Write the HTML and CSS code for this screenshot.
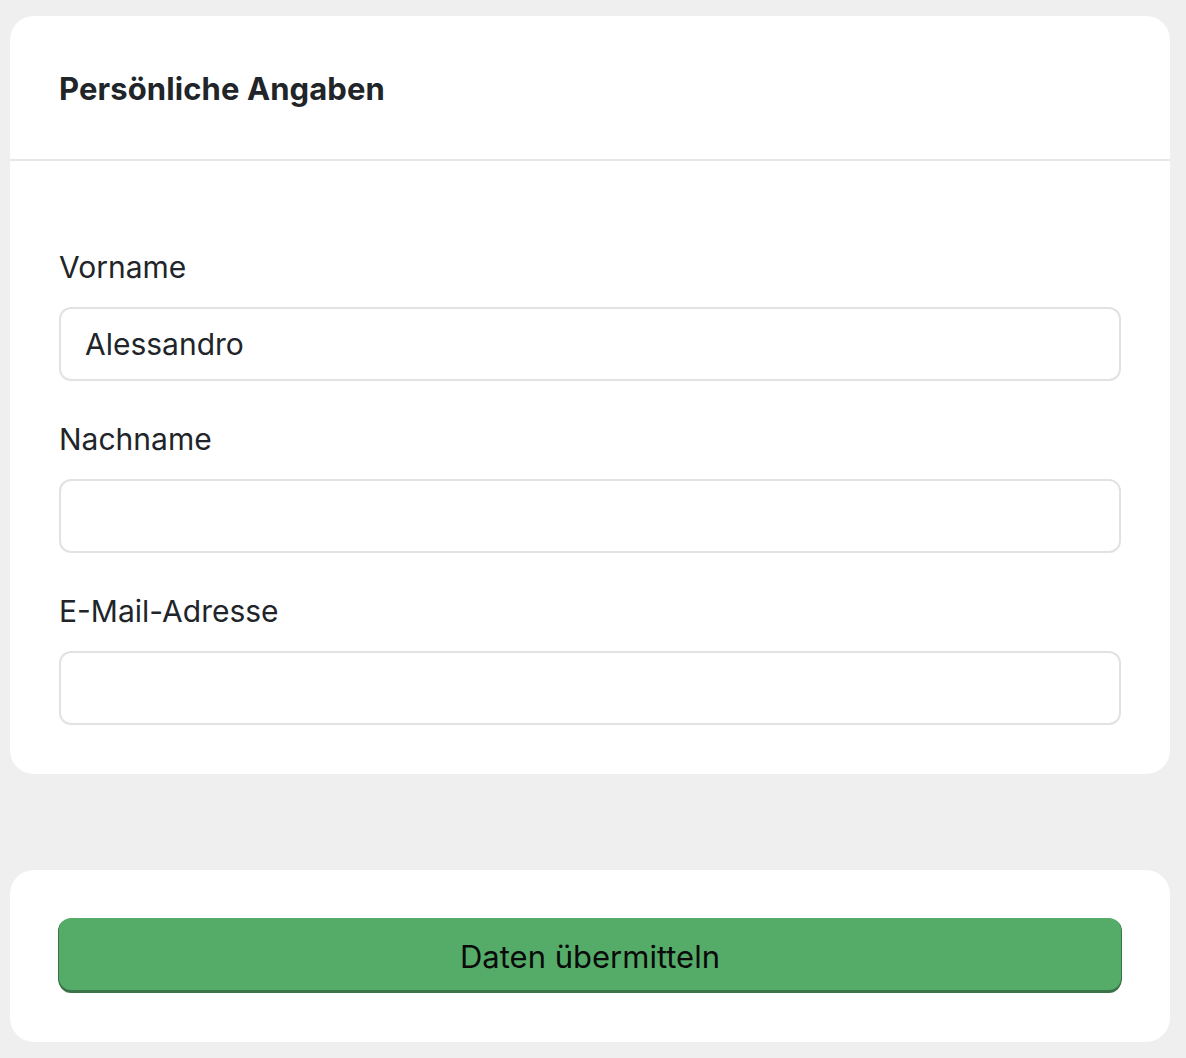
FILE: index.html
```html
<!DOCTYPE html>
<html lang="de">
<head>
<meta charset="utf-8">
<title>Persönliche Angaben</title>
<link rel="stylesheet" href="styles.css">
</head>
<body>
<main class="page">
  <section class="card">
    <header class="card-header">
      <h1 class="card-title">Persönliche Angaben</h1>
    </header>
    <div class="card-body">
      <div class="field">
        <label class="label" for="vorname">Vorname</label>
        <input class="input" id="vorname" type="text" value="Alessandro">
      </div>
      <div class="field">
        <label class="label" for="nachname">Nachname</label>
        <input class="input" id="nachname" type="text" value="">
      </div>
      <div class="field">
        <label class="label" for="email">E-Mail-Adresse</label>
        <input class="input" id="email" type="email" value="">
      </div>
    </div>
  </section>
  <section class="card card-actions">
    <button class="btn-submit" type="button">Daten übermitteln</button>
  </section>
</main>
</body>
</html>
```
FILE: styles.css
```css
* { box-sizing: border-box; }
html, body { margin: 0; padding: 0; }
body {
  background: #efefef;
  font-family: Inter, "Noto Sans", "Liberation Sans", sans-serif;
  color: #212529;
}
.page {
  display: flex;
  flex-direction: column;
  gap: 96px;
  padding: 16px 16px 16px 10px;
}
.card {
  background: #fff;
  border-radius: 24px;
}
.card-header {
  height: 145px;
  display: flex;
  align-items: center;
  padding: 0 49px;
  border-bottom: 2px solid #e6e6e6;
}
.card-title {
  margin: 0;
  font-size: 31px;
  font-weight: 700;
  line-height: 36px;
  letter-spacing: 0.1px;
  padding-top: 2px;
}
.card-body {
  padding: 48px 49px 49px;
  display: flex;
  flex-direction: column;
}
.field {
  margin-top: 41px;
  display: flex;
  flex-direction: column;
}
.label {
  font-size: 30px;
  line-height: 34px;
  margin-bottom: 23px;
}
.input {
  height: 74px;
  width: 100%;
  border: 2px solid #e0e2e4;
  border-radius: 12px;
  padding: 0 24px;
  font-family: inherit;
  font-size: 30px;
  color: #212529;
  background: #fff;
  outline: none;
}
.card-actions {
  padding: 48px 49px 49px;
}
.btn-submit {
  display: block;
  width: 100%;
  height: 72px;
  border: none;
  border-radius: 12px;
  background: #55ac69;
  box-shadow: 0 3px 0 #3a7347, -1px 1px 0 #3a7347, 1px 1px 0 #3a7347;
  font-family: inherit;
  font-size: 31px;
  color: #0a0a0a;
  padding: 4px 0 0;
  margin-bottom: 3px;
}
```
